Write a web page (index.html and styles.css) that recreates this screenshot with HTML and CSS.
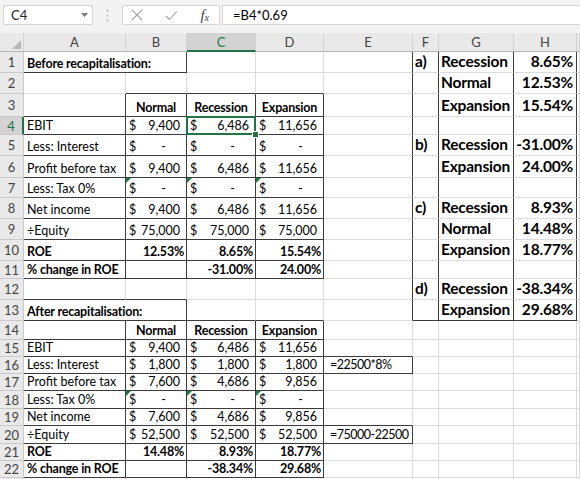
FILE: index.html
```html
<!DOCTYPE html>
<html lang="en">
<head>
    <meta charset="UTF-8">
    <title>ROE before and after recapitalisation</title>
    <link rel="stylesheet" href="styles.css">
</head>
<body>
    <div class="formula-bar">
        <div class="name-box">
            <span>C4</span>
            <svg class="caret" width="7" height="4" viewBox="0 0 7 4"><path d="M0 0H7L3.5 4Z" fill="#7a7a7a"/></svg>
        </div>
        <svg class="grip" width="3" height="13" viewBox="0 0 3 13"><circle cx="1.5" cy="1.5" r="1" fill="#b5b5b5"/><circle cx="1.5" cy="6.5" r="1" fill="#b5b5b5"/><circle cx="1.5" cy="11.5" r="1" fill="#b5b5b5"/></svg>
        <div class="fx-buttons">
            <svg width="12" height="12" viewBox="0 0 12 12"><path d="M1 1L11 11M11 1L1 11" stroke="#a6a6a6" stroke-width="1.1"/></svg>
            <svg width="13" height="11" viewBox="0 0 13 11"><path d="M1 6L4.5 9.5L12 1" stroke="#a6a6a6" stroke-width="1.1" fill="none"/></svg>
            <i class="fx">f<sub>x</sub></i>
        </div>
        <div class="formula">=B4*0.69</div>
    </div>

    <table class="sheet">
        <colgroup>
            <col style="width:24px"><col style="width:102px"><col style="width:61px"><col style="width:69px">
            <col style="width:68px"><col style="width:89px"><col style="width:26px"><col style="width:75px">
            <col style="width:63px"><col style="width:3px">
        </colgroup>
        <thead>
            <tr class="hdr">
                <th class="corner"><svg width="9" height="9" viewBox="0 0 9 9"><path d="M9 0V9H0Z" fill="#b7b7b7"/></svg></th>
                <th>A</th><th>B</th><th class="on">C</th><th>D</th><th>E</th><th>F</th><th>G</th><th>H</th><th></th>
            </tr>
        </thead>
        <tbody>
            <tr style="height:21px">
                <th>1</th>
                <td colspan="2" class="r b bold">Before recapitalisation:</td>
                <td></td><td></td><td class="r"></td>
                <td class="r big">a)</td><td class="r big">Recession</td><td class="r big num">8.65%</td><td></td>
            </tr>
            <tr style="height:20px">
                <th>2</th>
                <td></td><td class="b"></td><td class="b"></td><td class="b"></td><td class="r"></td>
                <td class="r"></td><td class="r big">Normal</td><td class="r big num">12.53%</td><td></td>
            </tr>
            <tr style="height:23px">
                <th>3</th>
                <td class="r b"></td>
                <td class="r b bold c">Normal</td><td class="r b bold c">Recession</td><td class="r b bold c">Expansion</td>
                <td class="r"></td>
                <td class="r"></td><td class="r big">Expansion</td><td class="r big num">15.54%</td><td></td>
            </tr>
            <tr style="height:18px">
                <th class="on">4</th>
                <td class="r b">EBIT</td>
                <td class="r b acc"><span class="cur">$</span>9,400</td>
                <td class="r b acc sel"><span class="cur">$</span>6,486</td>
                <td class="r b acc"><span class="cur">$</span>11,656</td>
                <td class="r"></td>
                <td class="r"></td><td class="r"></td><td class="r"></td><td></td>
            </tr>
            <tr style="height:21px">
                <th>5</th>
                <td class="r b">Less: Interest</td>
                <td class="r b acc zero"><span class="cur">$</span>-</td>
                <td class="r b acc zero"><span class="cur">$</span>-</td>
                <td class="r b acc zero"><span class="cur">$</span>-</td>
                <td class="r"></td>
                <td class="r big">b)</td><td class="r big">Recession</td><td class="r big num">-31.00%</td><td></td>
            </tr>
            <tr style="height:22px">
                <th>6</th>
                <td class="r b">Profit before tax</td>
                <td class="r b acc"><span class="cur">$</span>9,400</td>
                <td class="r b acc"><span class="cur">$</span>6,486</td>
                <td class="r b acc"><span class="cur">$</span>11,656</td>
                <td class="r"></td>
                <td class="r"></td><td class="r big">Expansion</td><td class="r big num">24.00%</td><td></td>
            </tr>
            <tr style="height:20px">
                <th>7</th>
                <td class="r b">Less: Tax 0%</td>
                <td class="r b acc zero flag"><span class="cur">$</span>-</td>
                <td class="r b acc zero flag"><span class="cur">$</span>-</td>
                <td class="r b acc zero flag"><span class="cur">$</span>-</td>
                <td class="r"></td>
                <td class="r"></td><td class="r"></td><td class="r"></td><td></td>
            </tr>
            <tr style="height:21px">
                <th>8</th>
                <td class="r b">Net income</td>
                <td class="r b acc"><span class="cur">$</span>9,400</td>
                <td class="r b acc"><span class="cur">$</span>6,486</td>
                <td class="r b acc"><span class="cur">$</span>11,656</td>
                <td class="r"></td>
                <td class="r big">c)</td><td class="r big">Recession</td><td class="r big num">8.93%</td><td></td>
            </tr>
            <tr style="height:20px">
                <th>9</th>
                <td class="r b">÷Equity</td>
                <td class="r b acc"><span class="cur">$</span>75,000</td>
                <td class="r b acc"><span class="cur">$</span>75,000</td>
                <td class="r b acc"><span class="cur">$</span>75,000</td>
                <td class="r"></td>
                <td class="r"></td><td class="r big">Normal</td><td class="r big num">14.48%</td><td></td>
            </tr>
            <tr style="height:21px">
                <th>10</th>
                <td class="r b bold">ROE</td>
                <td class="r b pct">12.53%</td><td class="r b pct">8.65%</td><td class="r b pct">15.54%</td>
                <td class="r"></td>
                <td class="r"></td><td class="r big">Expansion</td><td class="r big num">18.77%</td><td></td>
            </tr>
            <tr style="height:18px">
                <th>11</th>
                <td class="r b bold">% change in ROE</td>
                <td class="r b"></td><td class="r b pct">-31.00%</td><td class="r b pct">24.00%</td>
                <td class="r"></td>
                <td class="r"></td><td class="r"></td><td class="r"></td><td></td>
            </tr>
            <tr style="height:21px">
                <th>12</th>
                <td class="b"></td><td class="b"></td><td></td><td></td><td class="r"></td>
                <td class="r big">d)</td><td class="r big">Recession</td><td class="r big num">-38.34%</td><td></td>
            </tr>
            <tr style="height:21px">
                <th>13</th>
                <td colspan="2" class="r b bold">After recapitalisation:</td>
                <td class="b"></td><td class="b"></td><td class="r"></td>
                <td class="r b"></td><td class="r b big">Expansion</td><td class="r b big num">29.68%</td><td></td>
            </tr>
            <tr style="height:19px">
                <th>14</th>
                <td class="r b"></td>
                <td class="r b bold c">Normal</td><td class="r b bold c">Recession</td><td class="r b bold c">Expansion</td>
                <td></td><td></td><td></td><td></td><td></td>
            </tr>
            <tr style="height:17px">
                <th>15</th>
                <td class="r b">EBIT</td>
                <td class="r b acc"><span class="cur">$</span>9,400</td>
                <td class="r b acc"><span class="cur">$</span>6,486</td>
                <td class="r b acc"><span class="cur">$</span>11,656</td>
                <td class="b"></td><td></td><td></td><td></td><td></td>
            </tr>
            <tr style="height:17px">
                <th>16</th>
                <td class="r b">Less: Interest</td>
                <td class="r b acc"><span class="cur">$</span>1,800</td>
                <td class="r b acc"><span class="cur">$</span>1,800</td>
                <td class="r b acc"><span class="cur">$</span>1,800</td>
                <td class="r b note">=22500*8%</td><td></td><td></td><td></td><td></td>
            </tr>
            <tr style="height:17px">
                <th>17</th>
                <td class="r b">Profit before tax</td>
                <td class="r b acc"><span class="cur">$</span>7,600</td>
                <td class="r b acc"><span class="cur">$</span>4,686</td>
                <td class="r b acc"><span class="cur">$</span>9,856</td>
                <td></td><td></td><td></td><td></td><td></td>
            </tr>
            <tr style="height:18px">
                <th>18</th>
                <td class="r b">Less: Tax 0%</td>
                <td class="r b acc zero flag"><span class="cur">$</span>-</td>
                <td class="r b acc zero flag"><span class="cur">$</span>-</td>
                <td class="r b acc zero flag"><span class="cur">$</span>-</td>
                <td></td><td></td><td></td><td></td><td></td>
            </tr>
            <tr style="height:17px">
                <th>19</th>
                <td class="r b">Net income</td>
                <td class="r b acc"><span class="cur">$</span>7,600</td>
                <td class="r b acc"><span class="cur">$</span>4,686</td>
                <td class="r b acc"><span class="cur">$</span>9,856</td>
                <td class="b"></td><td></td><td></td><td></td><td></td>
            </tr>
            <tr style="height:18px">
                <th>20</th>
                <td class="r b">÷Equity</td>
                <td class="r b acc"><span class="cur">$</span>52,500</td>
                <td class="r b acc"><span class="cur">$</span>52,500</td>
                <td class="r b acc"><span class="cur">$</span>52,500</td>
                <td class="r b note">=75000-22500</td><td></td><td></td><td></td><td></td>
            </tr>
            <tr style="height:16px">
                <th>21</th>
                <td class="r b bold">ROE</td>
                <td class="r b pct">14.48%</td><td class="r b pct">8.93%</td><td class="r b pct">18.77%</td>
                <td></td><td></td><td></td><td></td><td></td>
            </tr>
            <tr style="height:17px">
                <th>22</th>
                <td class="r b bold">% change in ROE</td>
                <td class="r b"></td><td class="r b pct">-38.34%</td><td class="r b pct">29.68%</td>
                <td></td><td></td><td></td><td></td><td></td>
            </tr>
            <tr style="height:17px">
                <th></th>
                <td></td><td></td><td></td><td></td><td></td><td></td><td></td><td></td><td></td>
            </tr>
        </tbody>
    </table>
</body>
</html>
```

FILE: styles.css
```css
body {
    margin: 0;
    font-family: Lato, "Liberation Sans", sans-serif;
    background: #fff;
    color: #000;
    overflow: hidden;
}

/* formula bar */
.formula-bar {
    height: 33px;
    box-sizing: border-box;
    padding-top: 5px;
    display: flex;
    align-items: flex-start;
    background: #f3f3f3;
}

.name-box {
    margin-left: 3px;
    width: 90px;
    height: 20px;
    box-sizing: border-box;
    padding: 0 4px 0 7px;
    display: flex;
    align-items: center;
    justify-content: space-between;
    background: #fff;
    border: 1px solid #d6d6d6;
    font-size: 13px;
    color: #222;
}

.grip {
    margin: 4px 13px 0 13px;
}

.fx-buttons {
    width: 98px;
    height: 20px;
    box-sizing: border-box;
    padding: 0 10px 0 8px;
    display: flex;
    align-items: center;
    justify-content: space-between;
    background: #fff;
    border: 1px solid #d6d6d6;
}

.fx {
    font-family: "Liberation Serif", serif;
    font-size: 15px;
    color: #444;
    line-height: 1;
}

.fx sub {
    font-size: 10px;
    vertical-align: -1px;
}

.formula {
    flex: 1;
    margin-left: 2px;
    height: 20px;
    box-sizing: border-box;
    padding-left: 10px;
    line-height: 18px;
    background: #fff;
    border: 1px solid #d6d6d6;
    border-right: none;
    font-size: 13px;
}

/* sheet grid */
.sheet {
    table-layout: fixed;
    width: 580px;
    border-collapse: separate;
    border-spacing: 0;
    font-size: 12.5px;
}

.sheet th {
    padding: 0;
    background: #e9e9e9;
    color: #444;
    font-weight: normal;
    font-size: 13px;
    text-align: center;
    border-right: 1px solid #c9c9c9;
    border-bottom: 1px solid #c9c9c9;
}

.hdr {
    height: 19px;
}

.hdr th {
    border-right-color: #d2d2d2;
    border-bottom-color: #b4b4b4;
}

.corner {
    text-align: right !important;
    vertical-align: bottom;
}

.corner svg {
    display: block;
    margin: 0 2px 2px auto;
}

.sheet th.on {
    background: #d3d3d3;
    color: #217346;
}

.hdr th.on {
    border-bottom: 2px solid #217346;
}

tbody th.on {
    border-right: 2px solid #217346;
}

.sheet td {
    padding: 0 3px 1px 3px;
    line-height: 15px;
    vertical-align: bottom;
    white-space: nowrap;
    overflow: visible;
    border-right: 1px solid #dadcdd;
    border-bottom: 1px solid #dadcdd;
}

.sheet td.r {
    border-right-color: #3c3c3c;
}

.sheet td.b {
    border-bottom-color: #3c3c3c;
}

.bold {
    font-weight: bold;
    letter-spacing: -0.2px;
}

.c {
    text-align: center;
}

/* accounting format: $ at the left, figure at the right */
.acc {
    text-align: right;
    padding-right: 6px !important;
}

.cur {
    float: left;
}

.zero {
    padding-right: 20px !important;
}

.pct {
    text-align: right;
    font-weight: bold;
    letter-spacing: -0.2px;
    padding-right: 2px !important;
}

.note {
    padding-left: 6px !important;
    letter-spacing: -0.5px;
}

.big {
    font-size: 15.5px;
    font-weight: bold;
    letter-spacing: -0.2px;
    line-height: 19px !important;
    padding-left: 2px !important;
}

.num {
    text-align: right;
    padding-right: 3px !important;
}

/* green error marker in the corner */
.flag {
    position: relative;
}

.flag::before {
    content: "";
    position: absolute;
    left: 0;
    top: 0;
    border-top: 5px solid #1e7b44;
    border-right: 5px solid transparent;
}

/* active cell */
.sel {
    position: relative;
}

.sel::after {
    content: "";
    position: absolute;
    left: -1px;
    top: -1px;
    right: -1px;
    bottom: -1px;
    border: 2px solid #217346;
}

.sel::before {
    content: "";
    position: absolute;
    right: -4px;
    bottom: -4px;
    width: 5px;
    height: 5px;
    background: #217346;
    border: 1px solid #fff;
    z-index: 1;
}
```
